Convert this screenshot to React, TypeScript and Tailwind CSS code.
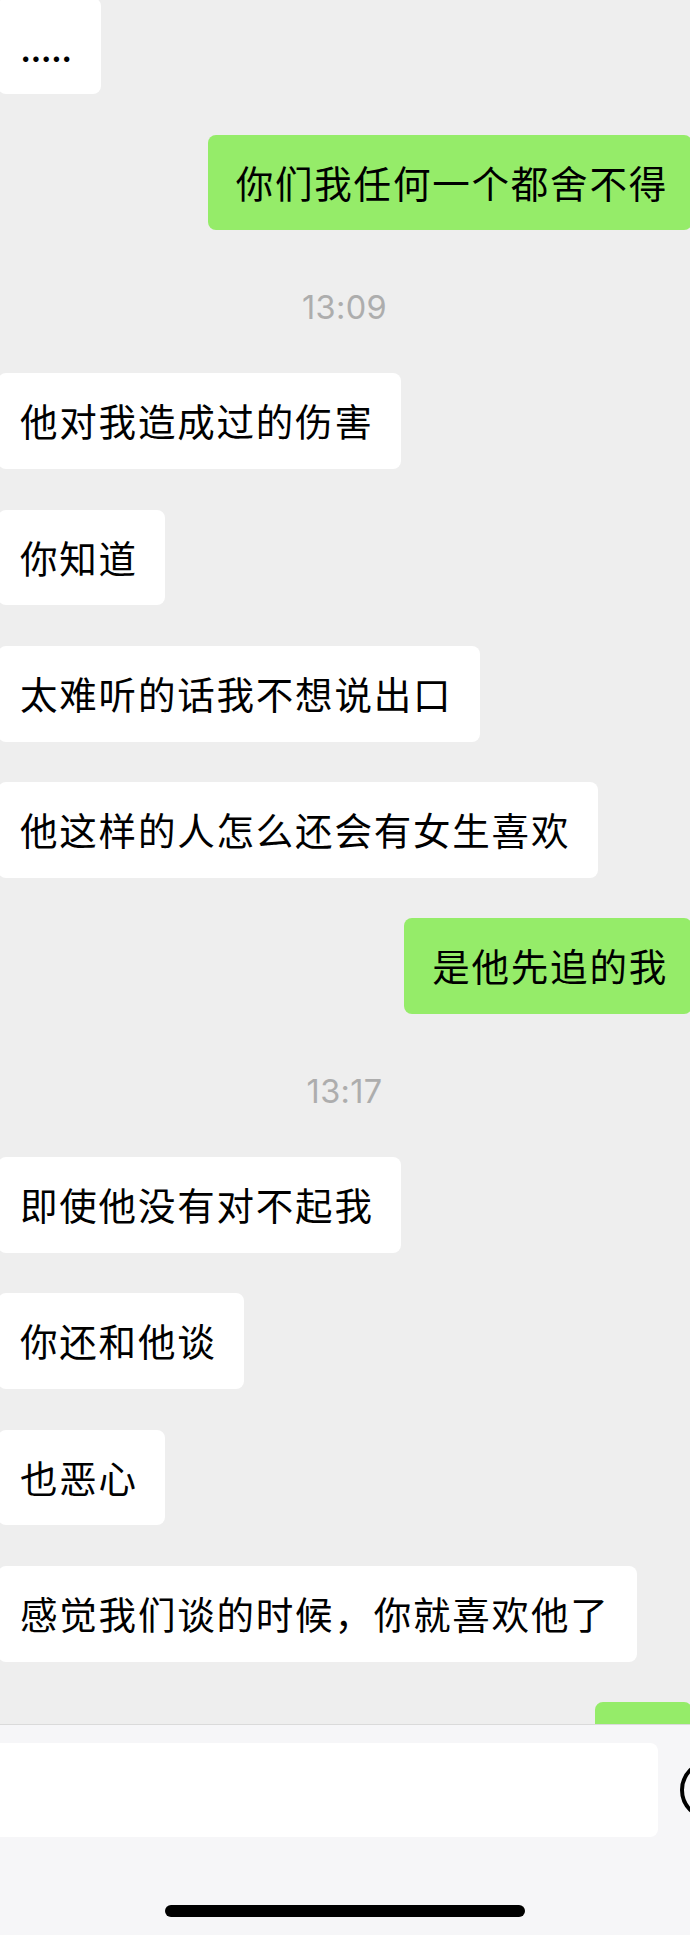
type ChatItem =
  | { type: 'in'; text: string; dots?: boolean }
  | { type: 'out'; text: string }
  | { type: 'time'; text: string };

const items: ChatItem[] = [
  { type: 'in', text: '.....', dots: true },
  { type: 'out', text: '你们我任何一个都舍不得' },
  { type: 'time', text: '13:09' },
  { type: 'in', text: '他对我造成过的伤害' },
  { type: 'in', text: '你知道' },
  { type: 'in', text: '太难听的话我不想说出口' },
  { type: 'in', text: '他这样的人怎么还会有女生喜欢' },
  { type: 'out', text: '是他先追的我' },
  { type: 'time', text: '13:17' },
  { type: 'in', text: '即使他没有对不起我' },
  { type: 'in', text: '你还和他谈' },
  { type: 'in', text: '也恶心' },
  { type: 'in', text: '感觉我们谈的时候，你就喜欢他了' },
  { type: 'out', text: '' },
];

const Bubble = ({ item }: { item: ChatItem }) => {
  if (item.type === 'time') {
    return (
      <div className="flex h-[62px] shrink-0 items-center justify-center pt-[13px] pr-px font-['Inter',sans-serif] text-[32.5px] leading-none tracking-[0.3px] text-[#adadad]">
        {item.text}
      </div>
    );
  }

  if (item.type === 'out') {
    return (
      <div className="-mr-0.5 flex h-[95.75px] min-w-[97.5px] shrink-0 items-center self-end rounded-lg bg-[#95ec69] pr-6 pb-[2px] pl-7 whitespace-nowrap">
        {item.text}
      </div>
    );
  }

  if (item.dots) {
    return (
      <div className="-ml-0.5 flex h-[95.75px] w-[103px] shrink-0 items-center self-start rounded-lg bg-white pt-[5px] pl-[22px] font-['Inter',sans-serif] font-medium tracking-[-1.1px] whitespace-nowrap">
        {item.text}
      </div>
    );
  }

  return (
    <div className="-ml-0.5 flex h-[95.75px] shrink-0 items-center self-start rounded-lg bg-white pr-[27.5px] pb-[2px] pl-[22px] whitespace-nowrap">
      {item.text}
    </div>
  );
};

// Кнопка справа от поля ввода, видна только левым краем
const RoundButton = () => (
  <svg width="60" height="60" viewBox="0 0 60 60" fill="none" className="ml-[22px] shrink-0">
    <circle cx="30" cy="30" r="28" stroke="#000" strokeWidth="4" />
  </svg>
);

const InputBar = () => (
  <div className="flex h-[211px] shrink-0 flex-col overflow-hidden border-t border-[#dadada] bg-[#f6f6f8]">
    <div className="flex items-center pt-[18px]">
      <div className="-ml-2 h-[94px] w-[666px] shrink-0 rounded-lg bg-white" />
      <RoundButton />
    </div>
    <div className="mt-[68px] ml-[165px] h-3 w-[360px] rounded-full bg-black" />
  </div>
);

export default function App() {
  return (
    <div className="flex h-[1935px] w-[690px] flex-col overflow-hidden bg-[#eeeeee]">
      <div
        lang="zh-CN"
        className="min-h-0 flex-1 overflow-hidden font-['Noto_Sans_CJK_SC',sans-serif] text-[37.5px] leading-none tracking-[1.8px] text-black"
      >
        <div className="-mt-[1.75px] flex flex-col gap-[40.5px]">
          {items.map((item, index) => (
            <Bubble key={index} item={item} />
          ))}
        </div>
      </div>
      <InputBar />
    </div>
  );
}
